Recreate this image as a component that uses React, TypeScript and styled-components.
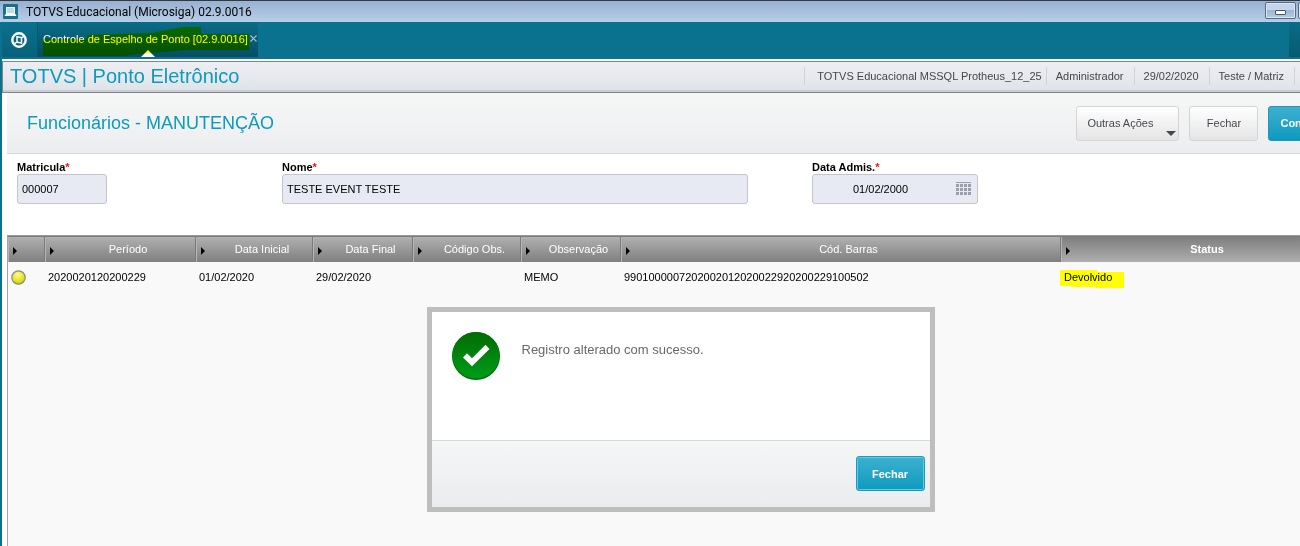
import React from "react";
import styled, { createGlobalStyle, css } from "styled-components";

const GlobalStyle = createGlobalStyle`
  *, *::before, *::after { box-sizing: border-box; }
  body {
    margin: 0;
    overflow: hidden;
    background: #0a728f;
    font-family: "Liberation Sans", Arial, sans-serif;
    font-size: 11px;
    line-height: 14px;
    color: #000;
  }
  button, input { font: inherit; color: inherit; }
`;

const Window = styled.div`
  display: flex;
  flex-direction: column;
  width: calc(100% + 54px);
  min-height: 100vh;
`;

const TitleBar = styled.header`
  display: flex;
  align-items: center;
  height: 22px;
  padding: 0 0 0 3px;
  border-top: 1px solid #35383f;
  background: linear-gradient(#98b1d1, #b7cee8);
`;

const AppTitle = styled.h1`
  flex: 1;
  margin: 0 0 0 8px;
  font: 400 12px/16px Roboto, "Noto Sans", sans-serif;
  color: #000;
`;

const WindowButtons = styled.div`
  display: flex;
  align-self: flex-start;
  gap: 2px;
  padding: 1px 10px 0 0;
`;

const WindowButton = styled.button<{ $width: number }>`
  display: flex;
  align-items: flex-end;
  justify-content: center;
  width: ${(p) => p.$width}px;
  height: 17px;
  padding: 0 0 3px;
  border: 1px solid #56698a;
  border-radius: 2px;
  background: linear-gradient(#c3d5ea 50%, #9db6d2 50%, #b5cce4);
  box-shadow: inset 0 0 0 1px #d9e6f4;
`;

const TabBar = styled.nav`
  display: flex;
  height: 37px;
  padding-left: 2px;
  background: #0a728f;
`;

const HomeButton = styled.button`
  display: flex;
  align-items: center;
  justify-content: center;
  width: 36px;
  height: 35px;
  padding: 0 2px 0 0;
  border: 0;
  border-right: 1px solid #075a70;
  background: linear-gradient(#0a728f, #086079);
`;

const Tab = styled.div`
  position: relative;
  display: flex;
  align-items: center;
  gap: 2px;
  height: 35px;
  padding: 0 1px 2px 5px;
  background: linear-gradient(#0a6c88, #064e61);
  color: #fff;
`;

const TabLink = styled.a`
  color: inherit;
  text-decoration: none;
  white-space: nowrap;
`;

const TabClose = styled.button`
  display: flex;
  padding: 0;
  border: 0;
  background: none;
`;

const TabPointer = styled.span`
  position: absolute;
  bottom: 0;
  left: 50%;
  margin-left: -7px;
  border: 7px solid transparent;
  border-top: 0;
  border-bottom-color: #fff;
`;

const TabMarker = styled.svg`
  position: absolute;
  top: 5px;
  left: 5px;
  mix-blend-mode: multiply;
  pointer-events: none;
`;

const TabMenu = styled.button`
  width: 65px;
  height: 35px;
  margin-left: auto;
  border: 0;
  background: linear-gradient(#0a6c88, #075a70);
`;

const Body = styled.div`
  flex: 1;
  display: flex;
  flex-direction: column;
  margin-left: 2px;
  padding-top: 2px;
  background: #fff;
`;

const ModuleBar = styled.div`
  display: flex;
  align-items: center;
  height: 32px;
  padding: 0 59px 2px 7px;
  border: 1px solid #828385;
  border-width: 1px 0 1px 1px;
  background: linear-gradient(#edeef2, #dfe3e8);
  box-shadow: inset 0 -2px 0 #c9ccd1;
`;

const ModuleName = styled.h2`
  flex: 1;
  margin: 0;
  font-size: 20px;
  font-weight: 400;
  line-height: 24px;
  color: #0d9abf;
`;

const Session = styled.ul`
  display: flex;
  margin: 0;
  padding: 0;
  list-style: none;
  color: #45474b;
`;

const SessionItem = styled.li<{ $first?: boolean }>`
  padding: ${(p) => (p.$first ? "2px 4px 2px 12px" : "2px 10px 2px 9px")};
  border-left: 1px solid #cfd3d6;
  &:last-child { border-right: 1px solid #cfd3d6; }
`;

const Panel = styled.main`
  position: relative;
  flex: 1;
  display: flex;
  flex-direction: column;
  margin-left: 5px;
`;

const ActionBar = styled.div`
  display: flex;
  align-items: center;
  gap: 10px;
  height: 61px;
  padding: 0 9px 0 20px;
  border-bottom: 1px solid #d7d8db;
  background: linear-gradient(#f5f7f6, #ecedf0);
`;

const PageTitle = styled.h3`
  flex: 1;
  margin: 0;
  font-size: 18px;
  font-weight: 400;
  line-height: 22px;
  color: #0d9abf;
`;

const Button = styled.button<{ $primary?: boolean; $menu?: boolean }>`
  position: relative;
  height: 35px;
  padding: 0 ${(p) => (p.$menu ? 25 : 11)}px 0 ${(p) => (p.$menu ? 10 : 11)}px;
  min-width: 69px;
  border: 1px solid #d4d4d5;
  border-radius: 3px;
  background: linear-gradient(#fff, #e4e4e5);
  color: #45494f;
  ${(p) =>
    p.$primary &&
    css`
      border-color: #2795b5;
      background: linear-gradient(#3db0cf, #0d9abf);
      color: #fff;
      font-weight: 700;
    `}
`;

const DialogButton = styled(Button)`
  box-shadow: inset 0 0 0 1px #4fd0f0;
`;

const MenuArrow = styled.span`
  position: absolute;
  right: 2px;
  bottom: 4px;
  border: 5px solid transparent;
  border-bottom: 0;
  border-top-color: #45494f;
`;

const Form = styled.form`
  display: flex;
  padding: 6px 10px 31px;
`;

const Field = styled.div<{ $slot?: number }>`
  flex: 0 0 ${(p) => (p.$slot ? `${p.$slot}px` : "auto")};
`;

const Label = styled.label`
  display: block;
  font-weight: 700;
`;

const Required = styled.span`
  color: #e11;
`;

const InputBox = styled.div<{ $width: number }>`
  display: flex;
  align-items: center;
  width: ${(p) => p.$width}px;
  height: 30px;
  padding-right: 5px;
  border: 1px solid #c3c5c8;
  border-radius: 3px;
  background: #e7eaf2;
`;

const Input = styled.input<{ $centered?: boolean }>`
  flex: 1;
  min-width: 0;
  padding: 0 ${(p) => (p.$centered ? 12 : 4)}px 0 4px;
  border: 0;
  outline: 0;
  background: none;
  text-align: ${(p) => (p.$centered ? "center" : "left")};
`;

const IconButton = styled.button`
  display: flex;
  padding: 0;
  border: 0;
  background: none;
`;

const Grid = styled.div`
  flex: 1;
  border-left: 1px solid #a5a5a5;
  border-top: 1px solid #979b98;
  background: #f9f9f9;
`;

const Table = styled.table`
  width: 100%;
  table-layout: fixed;
  border-collapse: separate;
  border-spacing: 0;
`;

const HeadCell = styled.th<{ $active?: boolean }>`
  position: relative;
  height: 26px;
  padding: 0 0 2px ${(p) => (p.$active ? 0 : 16)}px;
  border-top: 1px solid #7c7c7c;
  border-right: 1px solid #7a7a7a;
  box-shadow: inset 1px 0 0 #b5b5b5;
  background: ${(p) => (p.$active ? "linear-gradient(#7f7f7f, #adadad)" : "linear-gradient(#b0b0b0, #7f7f7f)")};
  color: #fff;
  font-weight: ${(p) => (p.$active ? 700 : 400)};
  &::before {
    content: "";
    position: absolute;
    left: 5px;
    top: 10px;
    border: 4px solid transparent;
    border-left-color: #000;
    border-right: 0;
  }
`;

const Cell = styled.td`
  height: 30px;
  padding: 0 2px 0 3px;
  white-space: nowrap;
`;

const Marked = styled.span`
  position: relative;
  z-index: 0;
`;

const StatusMarker = styled.svg`
  position: absolute;
  z-index: -1;
  left: -4px;
  top: -1px;
`;

const Dialog = styled.section`
  position: absolute;
  top: 214px;
  left: 0;
  right: 0;
  width: 508px;
  margin: 0 auto;
  border: 5px solid #bebebe;
  background: #fff;
`;

const DialogBody = styled.div`
  display: flex;
  gap: 22px;
  min-height: 128px;
  padding: 20px;
`;

const Message = styled.p`
  margin: 9px 0 0;
  font-size: 13px;
  line-height: 18px;
  color: #66686b;
`;

const DialogFooter = styled.footer`
  display: flex;
  justify-content: flex-end;
  height: 67px;
  padding: 15px 5px;
  border-top: 1px solid #d7d8da;
  background: linear-gradient(#f5f6f6, #ebecef);
`;

const AppIcon = () => (
  <svg width="15" height="16" viewBox="0 0 15 16" aria-hidden="true">
    <rect width="15" height="15" rx="1" fill="#17728c" />
    <path d="M3 3h9v7H3z" fill="#f2f7fa" />
    <path d="M4 4h7v5H4z" fill="#b9dbe6" />
    <path d="M2.5 10h10l1 2h-12z" fill="#f2f7fa" />
  </svg>
);

const Logo = () => (
  <svg width="16" height="16" viewBox="0 0 16 16" fill="none" aria-hidden="true">
    <circle cx="8" cy="8" r="6.700" stroke="#fff" strokeWidth="2.400" />
    <path d="M6 4.800 10.500 5.600V11L6 10.200z" stroke="#fff" strokeWidth="1.500" />
    <path d="M10.500 5.600 13 4.500M6 10.200 3.500 11.500" stroke="#fff" strokeWidth="1.500" />
  </svg>
);

const CalendarIcon = () => (
  <svg width="16" height="14" viewBox="0 0 16 14" fill="#9a9fab" aria-hidden="true">
    <path d="M0 0h15v1H0z" />
    {[2, 6, 10].map((y) =>
      [0, 4, 8, 12].map((x) => <rect key={`${x}-${y}`} x={x} y={y} width="3" height="3" />)
    )}
  </svg>
);

const YellowLight = () => (
  <svg width="15" height="15" viewBox="0 0 15 15" style={{ display: "block" }} role="img" aria-label="Amarelo">
    <defs>
      <radialGradient id="light" cx=".45" cy=".3" r=".7">
        <stop offset="0" stopColor="#fbfb8a" />
        <stop offset=".6" stopColor="#e6e62c" />
        <stop offset="1" stopColor="#c9c91c" />
      </radialGradient>
    </defs>
    <circle cx="7.5" cy="7.5" r="6.7" fill="url(#light)" stroke="#8b8b7c" strokeWidth="1.2" />
  </svg>
);

const SuccessIcon = () => (
  <svg width="48" height="48" viewBox="0 0 48 48" aria-hidden="true">
    <defs>
      <linearGradient id="ok" x1="0" y1="0" x2="0" y2="1">
        <stop offset="0" stopColor="#006c04" />
        <stop offset="1" stopColor="#009c18" />
      </linearGradient>
    </defs>
    <circle cx="24" cy="24" r="24" fill="#006a08" />
    <ellipse cx="24" cy="23.3" rx="23.6" ry="23.2" fill="url(#ok)" />
    <path d="M11 25.5 15 21.3 20 26.2 33.5 12.8 37.5 17 20 34.3z" fill="#fff" />
  </svg>
);

const session = ["TOTVS Educacional MSSQL Protheus_12_25", "Administrador", "29/02/2020", "Teste / Matriz"];

const columns: { title: string; width?: number; value: React.ReactNode; active?: boolean }[] = [
  { title: "", width: 37, value: <YellowLight /> },
  { title: "Período", width: 151, value: "2020020120200229" },
  { title: "Data Inicial", width: 117, value: "01/02/2020" },
  { title: "Data Final", width: 100, value: "29/02/2020" },
  { title: "Código Obs.", width: 108, value: "" },
  { title: "Observação", width: 100, value: "MEMO" },
  { title: "Cód. Barras", width: 440, value: "9901000007202002012020022920200229100502" },
  {
    title: "Status",
    active: true,
    value: (
      <Marked>
        <StatusMarker width="64" height="18" aria-hidden="true">
          <path d="M0 0h37v2h27v16H36v-1H12v-1H0z" fill="#ffff00" />
        </StatusMarker>
        Devolvido
      </Marked>
    ),
  },
];

export default function App() {
  return (
    <>
      <GlobalStyle />
      <Window>
        <TitleBar>
          <AppIcon />
          <AppTitle>TOTVS Educacional (Microsiga) 02.9.0016</AppTitle>
          <WindowButtons>
            <WindowButton $width={31} aria-label="Minimizar">
              <svg width="11" height="5" viewBox="0 0 11 5" aria-hidden="true">
                <rect x=".5" y=".5" width="10" height="4" rx=".5" fill="#fff" stroke="#4c5468" />
              </svg>
            </WindowButton>
            <WindowButton $width={22} aria-label="Restaurar" />
            <WindowButton $width={22} aria-label="Fechar janela" />
          </WindowButtons>
        </TitleBar>
        <TabBar>
          <HomeButton aria-label="Início">
            <Logo />
          </HomeButton>
          <Tab>
            <TabLink href="#ponto">Controle de Espelho de Ponto [02.9.0016]</TabLink>
            <TabClose aria-label="Fechar aba">
              <svg width="7" height="7" viewBox="0 0 7 7" stroke="#9fc3ce" strokeWidth="1.2" aria-hidden="true">
                <path d="m.5.5 6 6m0-6-6 6" />
              </svg>
            </TabClose>
            <TabPointer />
            <TabMarker width="206" height="30" aria-hidden="true">
              <path d="M0 12h44V8l30-1 34-1 16-3 16-3h18v7h48v16h-61l-24 2-26 2-14 2H0z" fill="#ffff00" />
            </TabMarker>
          </Tab>
          <TabMenu aria-label="Mais opções" />
        </TabBar>
        <Body>
          <ModuleBar>
            <ModuleName>TOTVS | Ponto Eletrônico</ModuleName>
            <Session>
              {session.map((text, i) => (
                <SessionItem key={text} $first={i === 0}>
                  {text}
                </SessionItem>
              ))}
            </Session>
          </ModuleBar>
          <Panel>
            <ActionBar>
              <PageTitle>Funcionários - MANUTENÇÃO</PageTitle>
              <Button $menu>
                Outras Ações
                <MenuArrow />
              </Button>
              <Button>Fechar</Button>
              <Button $primary>Confirmar</Button>
            </ActionBar>
            <Form onSubmit={(e) => e.preventDefault()}>
              <Field $slot={265}>
                <Label htmlFor="matricula">
                  Matricula<Required>*</Required>
                </Label>
                <InputBox $width={90}>
                  <Input id="matricula" defaultValue="000007" />
                </InputBox>
              </Field>
              <Field $slot={530}>
                <Label htmlFor="nome">
                  Nome<Required>*</Required>
                </Label>
                <InputBox $width={466}>
                  <Input id="nome" defaultValue="TESTE EVENT TESTE" />
                </InputBox>
              </Field>
              <Field>
                <Label htmlFor="admissao">
                  Data Admis.<Required>*</Required>
                </Label>
                <InputBox $width={166}>
                  <Input id="admissao" $centered defaultValue="01/02/2000" />
                  <IconButton type="button" aria-label="Abrir calendário">
                    <CalendarIcon />
                  </IconButton>
                </InputBox>
              </Field>
            </Form>
            <Grid>
              <Table>
                <colgroup>
                  {columns.map((c) => (
                    <col key={c.title} width={c.width} />
                  ))}
                </colgroup>
                <thead>
                  <tr>
                    {columns.map((c) => (
                      <HeadCell key={c.title} $active={c.active}>
                        {c.title}
                      </HeadCell>
                    ))}
                  </tr>
                </thead>
                <tbody>
                  <tr>
                    {columns.map((c) => (
                      <Cell key={c.title}>{c.value}</Cell>
                    ))}
                  </tr>
                </tbody>
              </Table>
            </Grid>
            <Dialog role="dialog" aria-label="Mensagem">
              <DialogBody>
                <SuccessIcon />
                <Message>Registro alterado com sucesso.</Message>
              </DialogBody>
              <DialogFooter>
                <DialogButton $primary>Fechar</DialogButton>
              </DialogFooter>
            </Dialog>
          </Panel>
        </Body>
      </Window>
    </>
  );
}
